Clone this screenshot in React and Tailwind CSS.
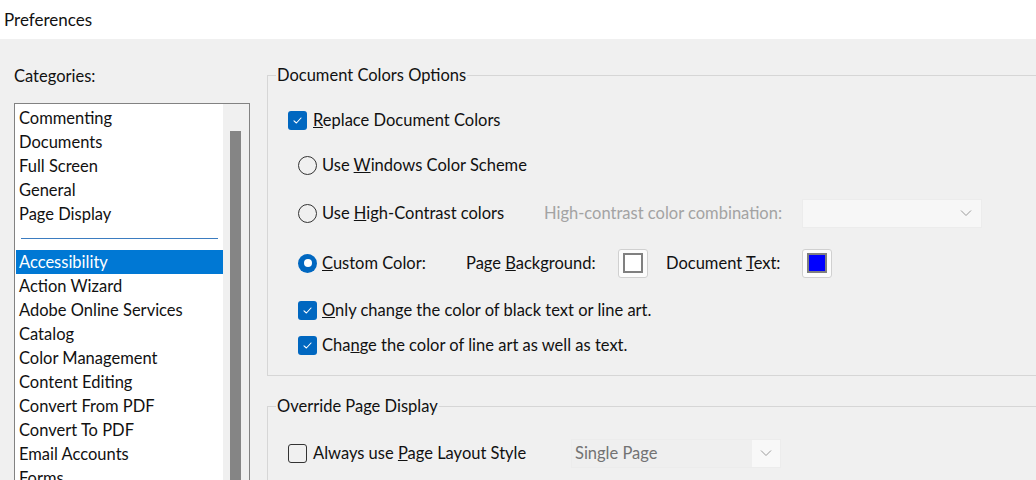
import React from 'react';

const FONT = { fontFamily: 'Lato, "Noto Sans", sans-serif' };

const TOP_ITEMS = ['Commenting', 'Documents', 'Full Screen', 'General', 'Page Display'];
const OTHER_ITEMS = [
  'Accessibility', 'Action Wizard', 'Adobe Online Services', 'Catalog', 'Color Management',
  'Content Editing', 'Convert From PDF', 'Convert To PDF', 'Email Accounts', 'Forms',
];

function Check({ checked }) {
  if (!checked) {
    return <span className="w-[19px] h-[19px] rounded-[3px] border border-[#333] shrink-0" />;
  }
  return (
    <span className="w-[19px] h-[19px] rounded-[3px] bg-[#0067c0] flex items-center justify-center shrink-0">
      <svg width="11" height="11" viewBox="0 0 11 11" fill="none">
        <polyline points="2,5.8 4.4,8 9,3" stroke="white" strokeWidth="1.1" strokeLinecap="round" strokeLinejoin="round" />
      </svg>
    </span>
  );
}

function Radio({ on }) {
  if (on) {
    return (
      <span className="w-[19px] h-[19px] rounded-full bg-[#0067c0] flex items-center justify-center shrink-0">
        <span className="w-[8px] h-[8px] rounded-full bg-white" />
      </span>
    );
  }
  return <span className="w-[19px] h-[19px] rounded-full border border-[#333] shrink-0" />;
}

function Swatch({ color }) {
  return (
    <span className="w-[30px] h-[29px] rounded-[3px] border border-[#d0d0d0] bg-[#fcfcfc] flex items-center justify-center shrink-0">
      <span className="w-[20px] h-[20px] border-2 border-[#808080]" style={{ background: color }} />
    </span>
  );
}

function Chevron() {
  return (
    <svg width="12" height="8" viewBox="0 0 12 8" fill="none">
      <polyline points="1,1.5 6,6.5 11,1.5" stroke="#9a9a9a" strokeWidth="1" />
    </svg>
  );
}

export default function App() {
  return (
    <div className="w-[1036px] h-[480px] overflow-hidden bg-[#f0f0f0] text-[#111] flex flex-col" style={FONT}>
      {/* Title bar */}
      <div className="h-[39px] bg-white flex items-center pl-[4px] text-[17px] shrink-0">Preferences</div>

      <div className="flex flex-1 min-h-0">
        {/* Categories */}
        <div className="w-[267px] shrink-0 pl-[14px] pt-[26px]">
          <div className="text-[16.5px] leading-[22px]">Categories:</div>
          <div className="mt-[16px] w-[236px] h-[400px] border border-[#828282] flex">
            <div className="w-[208px] bg-white pt-[2px] pl-[1px] text-[16.5px]">
              {TOP_ITEMS.map(t => (
                <div key={t} className="h-[24px] leading-[24px] pl-[3px]">{t}</div>
              ))}
              <div className="h-[24px] flex items-center pl-[5px] pr-[5px]">
                <div className="h-px w-full bg-[#3b7cc0]" />
              </div>
              {OTHER_ITEMS.map((t, i) => (
                <div
                  key={t}
                  className={`h-[24px] leading-[24px] pl-[3px] whitespace-nowrap ${i === 0 ? 'bg-[#0078d4] text-white' : ''}`}
                >
                  {t}
                </div>
              ))}
            </div>
            {/* scrollbar */}
            <div className="flex-1 bg-[#f0f0f0] pl-[7px] pt-[27px]">
              <div className="w-[11px] h-full bg-[#858585]" />
            </div>
          </div>
        </div>

        {/* Options */}
        <div className="flex-1 text-[16.5px] whitespace-nowrap">
          <fieldset className="mt-[25px] border-t border-l border-b border-[#d6d6d6] pb-[15px] pt-[19px]">
            <legend className="ml-[8px] px-[1px] leading-[22px]">Document Colors Options</legend>

            <div className="h-[30px] flex items-center pl-[20px] gap-[6px]">
              <Check checked />
              <span><u>R</u>eplace Document Colors</span>
            </div>

            <div className="mt-[15px] h-[30px] flex items-center pl-[30px] gap-[5px]">
              <Radio />
              <span>Use <u>W</u>indows Color Scheme</span>
            </div>

            <div className="mt-[18px] h-[30px] flex items-center pl-[30px]">
              <Radio />
              <span className="ml-[5px] w-[222px]">Use <u>H</u>igh-Contrast colors</span>
              <span className="text-[#a3a3a3] w-[258px]">Hi<u>g</u>h-contrast color combination:</span>
              <span className="w-[180px] h-[29px] bg-[#f7f7f7] border border-[#ececec] flex items-center justify-end pr-[9px]">
                <Chevron />
              </span>
            </div>

            <div className="mt-[20px] h-[30px] flex items-center pl-[30px]">
              <Radio on />
              <span className="ml-[5px] w-[144px]"><u>C</u>ustom Color:</span>
              <span className="w-[152px]">Page <u>B</u>ackground:</span>
              <Swatch color="#ffffff" />
              <span className="ml-[18px] w-[136px]">Document <u>T</u>ext:</span>
              <Swatch color="#0000ff" />
            </div>

            <div className="mt-[17px] h-[30px] flex items-center pl-[30px] gap-[5px]">
              <Check checked />
              <span><u>O</u>nly change the color of black text or line art.</span>
            </div>

            <div className="mt-[5px] h-[30px] flex items-center pl-[30px] gap-[5px]">
              <Check checked />
              <span>Cha<u>n</u>ge the color of line art as well as text.</span>
            </div>
          </fieldset>

          <fieldset className="mt-[19px] border-t border-l border-[#d6d6d6] pt-[21px] h-[200px]">
            <legend className="ml-[8px] px-[1px] leading-[22px]">Override Page Display</legend>
            <div className="h-[30px] flex items-center pl-[20px]">
              <Check />
              <span className="ml-[6px] w-[258px]">Always use <u>P</u>age Layout Style</span>
              <span className="w-[210px] h-[29px] bg-[#f8f8f8] border border-[#ececec] flex items-center">
                <span className="w-[180px] h-full bg-[#efefef] text-[#737373] pl-[3px] flex items-center">Single Page</span>
                <span className="flex-1 flex justify-center"><Chevron /></span>
              </span>
            </div>
          </fieldset>
        </div>
      </div>
    </div>
  );
}
